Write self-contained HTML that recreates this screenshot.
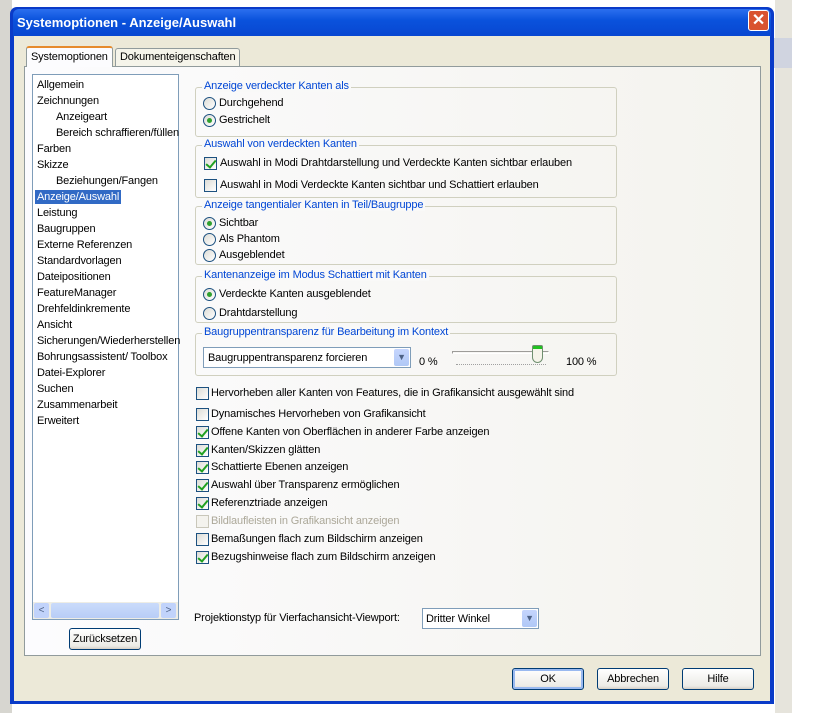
<!DOCTYPE html><html><head><meta charset="utf-8"><style>
*{box-sizing:border-box;margin:0;padding:0}
body{width:840px;height:713px;position:relative;overflow:hidden;background:#fff;font-family:"Liberation Sans",sans-serif;font-size:11px;letter-spacing:-0.15px;color:#000}
.a{position:absolute}
.dlg{left:10px;top:7px;width:764px;height:697px;background:#0a3bc8;border-radius:7px 7px 0 0}
.title{left:13px;top:9px;width:758px;height:28px;background:linear-gradient(#2b6fef,#0a52dc 40%,#0846d0);border-radius:6px 6px 0 0;color:#fff;font-weight:bold;font-size:13px;padding:6px 0 0 4px;letter-spacing:0}
.body{left:14px;top:36px;width:756px;height:665px;background:#ece9d8}
.panel{left:24px;top:66px;width:737px;height:590px;background:linear-gradient(90deg,#fcfcfe,#f4f3ee);border:1px solid #919b9c}
.tab{height:20px;border:1px solid #919b9c;border-bottom:none;background:#f5f4ea;padding:3px 4px;border-radius:3px 3px 0 0}
.list{left:32px;top:74px;width:147px;height:546px;background:#fff;border:1px solid #7f9db9}
.li{position:absolute;left:4px;white-space:nowrap}
.grp{position:absolute;border:1px solid #d0d0bf;border-radius:3px}
.gl{position:absolute;top:-8px;left:6px;background:#f9f9f8;color:#0046d5;padding:0 2px}
.rb{position:absolute;width:13px;height:13px;border:1px solid #1c5180;border-radius:50%;background:linear-gradient(135deg,#dcdcd6,#fff)}
.rb.on::after{content:"";position:absolute;left:3px;top:3px;width:5px;height:5px;border-radius:50%;background:#2fa02f}
.cb{position:absolute;width:13px;height:13px;border:1px solid #1c5180;background:linear-gradient(135deg,#dcdcd6,#fff)}
.cb.on::after{content:"";position:absolute;left:3px;top:0px;width:4px;height:8px;border:solid #21a121;border-width:0 2px 2px 0;transform:rotate(40deg)}
.t{position:absolute;white-space:nowrap}
.btn{position:absolute;border:1px solid #003c74;border-radius:3px;background:linear-gradient(#fff,#ecebe6 85%,#d6d0c5);text-align:center;line-height:20px}
.combo{position:absolute;background:#fff;border:1px solid #7f9db9}
.dd{position:absolute;right:1px;top:1px;width:15px;bottom:1px;background:linear-gradient(#c5d5fd,#b0c8f6);border-radius:2px;color:#4d6185;font-size:9px;text-align:center;line-height:16px}
</style></head><body>
<div class="a" style="left:0;top:0;width:12px;height:713px;background:#d7d6d0"></div>
<div class="a" style="left:774px;top:0;width:18px;height:713px;background:#e6e4dc;border-left:1px solid #fff"></div>
<div class="a" style="left:774px;top:38px;width:18px;height:30px;background:#d0d4e0"></div>
<div class="a dlg"></div>
<div class="a title">Systemoptionen - Anzeige/Auswahl</div>
<div class="a" style="left:748px;top:10px;width:21px;height:21px;background:#d9532f;border:1px solid #fff;border-radius:3px;color:#fff;font-size:16px;font-weight:bold;text-align:center;line-height:19px">✕</div>
<div class="a body"></div>
<div class="a panel"></div>
<div class="a tab" style="left:26px;top:46px;background:#fcfcfe;height:21px;border-top:2px solid #e68b2c;z-index:2">Systemoptionen</div>
<div class="a tab" style="left:115px;top:48px;height:18px;padding-top:2px">Dokumenteigenschaften</div>
<div class="a list">
<div class="li" style="top:4px">Allgemein</div>
<div class="li" style="top:20px">Zeichnungen</div>
<div class="li" style="top:36px;left:23px">Anzeigeart</div>
<div class="li" style="top:52px;left:23px">Bereich schraffieren/füllen</div>
<div class="li" style="top:68px">Farben</div>
<div class="li" style="top:84px">Skizze</div>
<div class="li" style="top:100px;left:23px">Beziehungen/Fangen</div>
<div class="li" style="top:115px;left:2px;background:#316ac5;color:#fff;padding:1px 2px">Anzeige/Auswahl</div>
<div class="li" style="top:132px">Leistung</div>
<div class="li" style="top:148px">Baugruppen</div>
<div class="li" style="top:164px">Externe Referenzen</div>
<div class="li" style="top:180px">Standardvorlagen</div>
<div class="li" style="top:196px">Dateipositionen</div>
<div class="li" style="top:212px">FeatureManager</div>
<div class="li" style="top:228px">Drehfeldinkremente</div>
<div class="li" style="top:244px">Ansicht</div>
<div class="li" style="top:260px">Sicherungen/Wiederherstellen</div>
<div class="li" style="top:276px">Bohrungsassistent/ Toolbox</div>
<div class="li" style="top:292px">Datei-Explorer</div>
<div class="li" style="top:308px">Suchen</div>
<div class="li" style="top:324px">Zusammenarbeit</div>
<div class="li" style="top:340px">Erweitert</div>
<div class="a" style="left:0;top:527px;width:145px;height:17px;background:#eeede5"></div>
<div class="a" style="left:1px;top:528px;width:15px;height:15px;background:#c1d3fb;border-radius:2px;color:#4d6185;text-align:center;font-size:10px;line-height:15px">&lt;</div>
<div class="a" style="left:18px;top:528px;width:108px;height:15px;background:linear-gradient(#cadbfb,#b8cdf6);border-radius:2px"></div>
<div class="a" style="left:128px;top:528px;width:15px;height:15px;background:#c1d3fb;border-radius:2px;color:#4d6185;text-align:center;font-size:10px;line-height:15px">&gt;</div>
</div>
<div class="btn" style="left:69px;top:628px;width:72px;height:22px">Zurücksetzen</div>

<div class="grp" style="left:195px;top:87px;width:422px;height:50px"><span class="gl">Anzeige verdeckter Kanten als</span></div>
<div class="rb" style="left:203px;top:97px"></div><span class="t" style="left:219px;top:97px">Durchgehend</span>
<div class="rb on" style="left:203px;top:114px"></div><span class="t" style="left:219px;top:114px">Gestrichelt</span>

<div class="grp" style="left:195px;top:145px;width:422px;height:53px"><span class="gl">Auswahl von verdeckten Kanten</span></div>
<div class="cb on" style="left:204px;top:157px"></div><span class="t" style="left:220px;top:157px">Auswahl in Modi Drahtdarstellung und Verdeckte Kanten sichtbar erlauben</span>
<div class="cb" style="left:204px;top:179px"></div><span class="t" style="left:220px;top:179px">Auswahl in Modi Verdeckte Kanten sichtbar und Schattiert erlauben</span>

<div class="grp" style="left:195px;top:206px;width:422px;height:59px"><span class="gl">Anzeige tangentialer Kanten in Teil/Baugruppe</span></div>
<div class="rb on" style="left:203px;top:217px"></div><span class="t" style="left:219px;top:217px">Sichtbar</span>
<div class="rb" style="left:203px;top:233px"></div><span class="t" style="left:219px;top:233px">Als Phantom</span>
<div class="rb" style="left:203px;top:249px"></div><span class="t" style="left:219px;top:249px">Ausgeblendet</span>

<div class="grp" style="left:195px;top:276px;width:422px;height:47px"><span class="gl">Kantenanzeige im Modus Schattiert mit Kanten</span></div>
<div class="rb on" style="left:203px;top:288px"></div><span class="t" style="left:219px;top:288px">Verdeckte Kanten ausgeblendet</span>
<div class="rb" style="left:203px;top:307px"></div><span class="t" style="left:219px;top:307px">Drahtdarstellung</span>

<div class="grp" style="left:195px;top:333px;width:422px;height:43px"><span class="gl">Baugruppentransparenz für Bearbeitung im Kontext</span></div>
<div class="combo" style="left:203px;top:347px;width:208px;height:21px"><span class="t" style="left:4px;top:4px">Baugruppentransparenz forcieren</span><div class="dd">▼</div></div>
<span class="t" style="left:419px;top:356px">0 %</span>
<div class="a" style="left:452px;top:351px;width:97px;height:3px;border:1px solid #9d9c99;border-right-color:#fff;border-bottom-color:#fff"></div>
<div class="a" style="left:456px;top:364px;width:90px;height:1px;border-top:1px dotted #a0a0a0"></div>
<div class="a" style="left:532px;top:345px;width:11px;height:18px;background:linear-gradient(#21c121 0 3px,#f5f4ea 3px);border:1px solid #6f8f6f;border-radius:2px 2px 6px 6px"></div>
<span class="t" style="left:566px;top:356px">100 %</span>

<div class="cb" style="left:196px;top:387px"></div><span class="t" style="left:211px;top:387px">Hervorheben aller Kanten von Features, die in Grafikansicht ausgewählt sind</span>
<div class="cb" style="left:196px;top:408px"></div><span class="t" style="left:211px;top:408px">Dynamisches Hervorheben von Grafikansicht</span>
<div class="cb on" style="left:196px;top:426px"></div><span class="t" style="left:211px;top:426px">Offene Kanten von Oberflächen in anderer Farbe anzeigen</span>
<div class="cb on" style="left:196px;top:444px"></div><span class="t" style="left:211px;top:444px">Kanten/Skizzen glätten</span>
<div class="cb on" style="left:196px;top:461px"></div><span class="t" style="left:211px;top:461px">Schattierte Ebenen anzeigen</span>
<div class="cb on" style="left:196px;top:479px"></div><span class="t" style="left:211px;top:479px">Auswahl über Transparenz ermöglichen</span>
<div class="cb on" style="left:196px;top:497px"></div><span class="t" style="left:211px;top:497px">Referenztriade anzeigen</span>
<div class="cb" style="left:196px;top:515px;border-color:#c9c7ba;background:#f4f3ee"></div><span class="t" style="left:211px;top:515px;color:#aca899">Bildlaufleisten in Grafikansicht anzeigen</span>
<div class="cb" style="left:196px;top:533px"></div><span class="t" style="left:211px;top:533px">Bemaßungen flach zum Bildschirm anzeigen</span>
<div class="cb on" style="left:196px;top:551px"></div><span class="t" style="left:211px;top:551px">Bezugshinweise flach zum Bildschirm anzeigen</span>

<span class="t" style="left:194px;top:612px">Projektionstyp für Vierfachansicht-Viewport:</span>
<div class="combo" style="left:422px;top:608px;width:117px;height:21px"><span class="t" style="left:3px;top:4px">Dritter Winkel</span><div class="dd">▼</div></div>

<div class="btn" style="left:512px;top:668px;width:72px;height:22px;border-color:#003c74;box-shadow:inset 0 0 0 2px #99b9f0">OK</div>
<div class="btn" style="left:597px;top:668px;width:72px;height:22px">Abbrechen</div>
<div class="btn" style="left:682px;top:668px;width:72px;height:22px">Hilfe</div>
</body></html>
